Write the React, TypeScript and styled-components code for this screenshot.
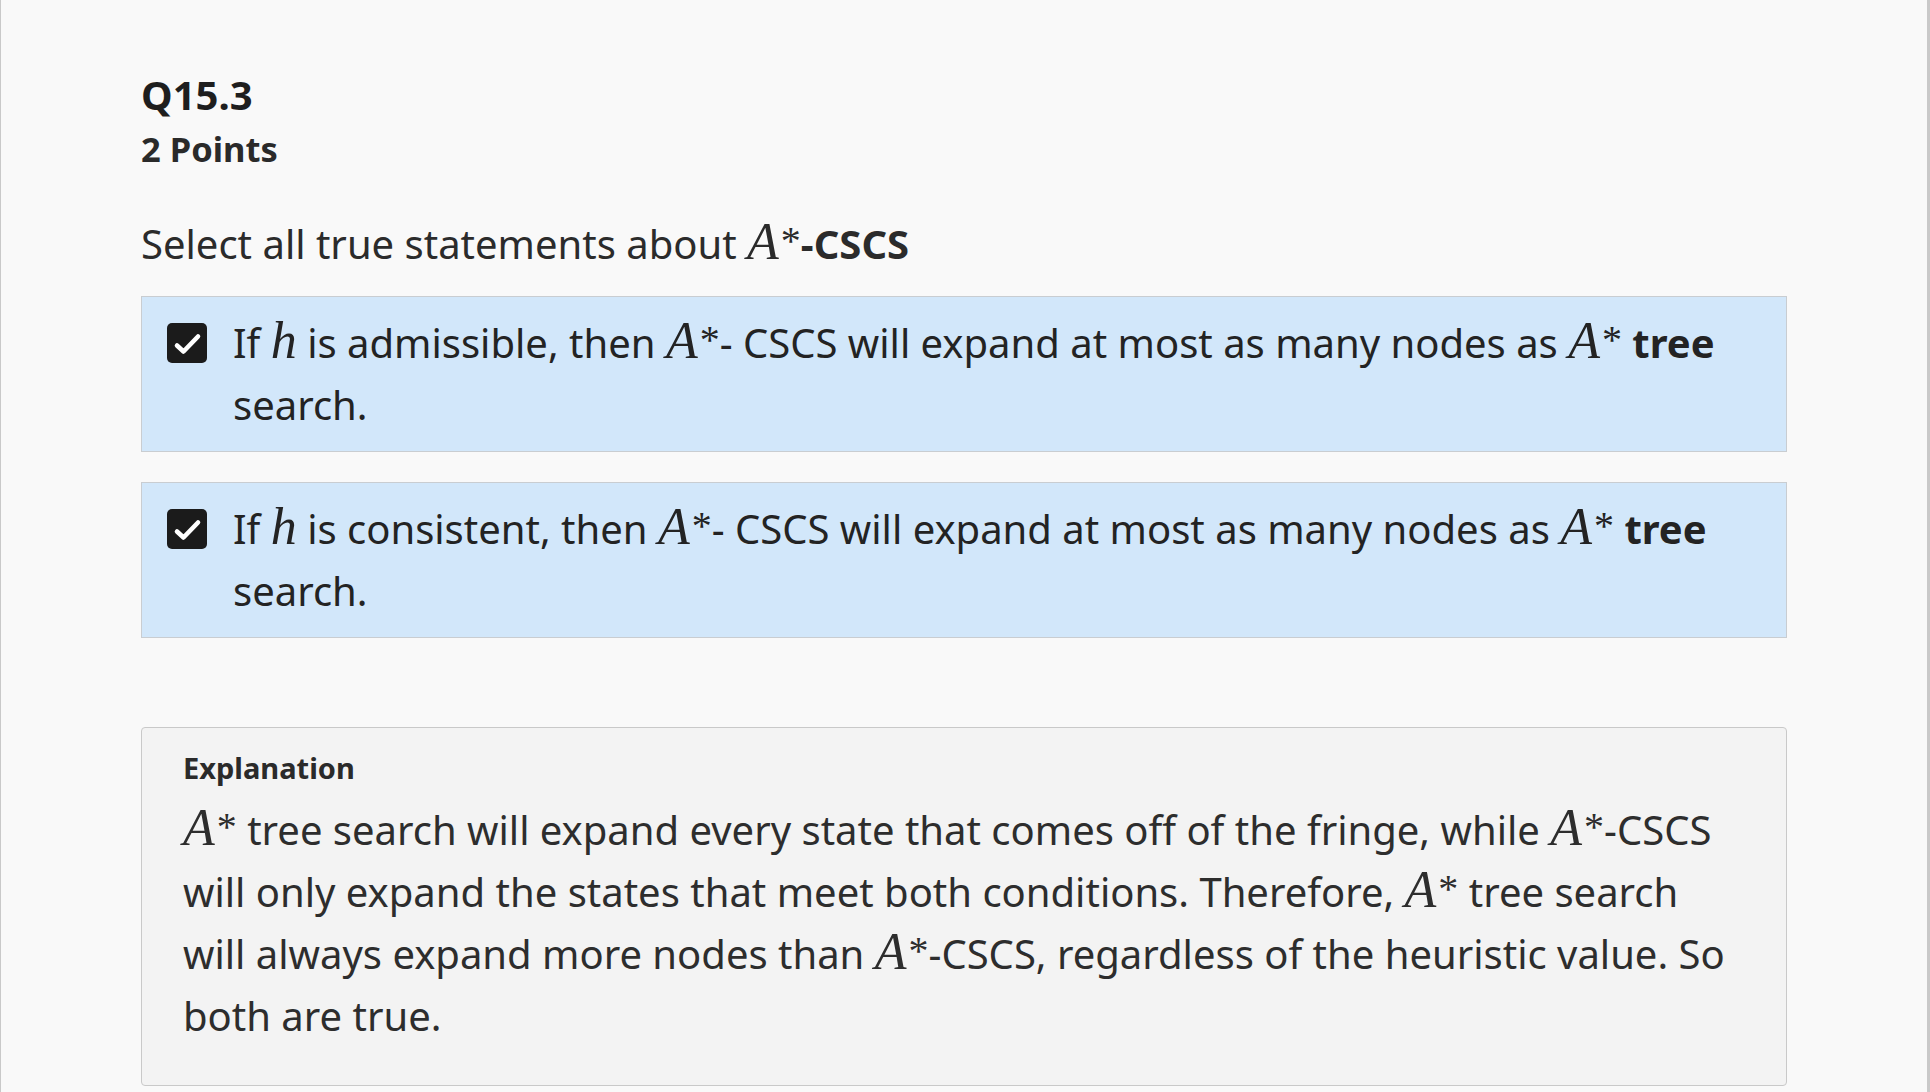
import React from "react";
import styled, { createGlobalStyle } from "styled-components";

const Global = createGlobalStyle`
  html, body {
    margin: 0;
    padding: 0;
    background: #f9f9f9;
  }
  body {
    font-family: "Noto Sans", "Open Sans", sans-serif;
    color: #2b2b2b;
  }
`;

const Page = styled.main`
  box-sizing: border-box;
  width: 1930px;
  min-height: 1092px;
  background: #f9f9f9;
  border-left: 1px solid #c9c9c9;
  border-right: 3px solid #c9c9c9;
  padding: 68px 140px 0 140px;
`;

const Title = styled.h2`
  margin: 0;
  font-size: 40px;
  line-height: 54px;
  font-weight: 700;
  color: #1e1e1e;
`;

const Points = styled.div`
  font-size: 34.5px;
  line-height: 54px;
  font-weight: 700;
  color: #2a2a2a;
`;

const Prompt = styled.p`
  margin: 37px 0 21px;
  font-size: 40px;
  line-height: 62px;
  color: #2b2b2b;
`;

const Options = styled.div`
  display: flex;
  flex-direction: column;
  gap: 30px;
`;

const Option = styled.label<{ $checked?: boolean }>`
  display: flex;
  align-items: flex-start;
  gap: 26px;
  padding: 15px 30px 15px 25px;
  border: 1px solid #c9cdd1;
  background: ${(p) => (p.$checked ? "#d2e7fa" : "#f9f9f9")};
  font-size: 40px;
  line-height: 62px;
  color: #232323;
`;

const BoxCell = styled.span`
  flex: none;
  height: 62px;
  display: flex;
  align-items: center;
`;

const Box = styled.span`
  width: 40px;
  height: 40px;
  border-radius: 5px;
  background: #1b1b1b;
  display: flex;
  align-items: center;
  justify-content: center;
`;

const OptionText = styled.span`
  flex: 1;
`;

const Var = styled.span`
  font-family: "Liberation Serif", "DejaVu Serif", serif;
  font-style: italic;
  font-size: 1.3em;
  line-height: 1;
`;

const Star = styled.span`
  font-family: "Liberation Serif", "DejaVu Serif", serif;
  font-size: 1em;
  line-height: 1;
  vertical-align: 0.12em;
  margin-left: 2px;
`;

const Strong = styled.b`
  font-weight: 700;
`;

const Explanation = styled.section`
  margin-top: 89px;
  border: 1px solid #c9c9c9;
  border-radius: 4px;
  background: #f3f3f3;
  padding: 17px 50px 38px 41px;
`;

const ExplLabel = styled.div`
  font-size: 29px;
  line-height: 46px;
  font-weight: 700;
  color: #2a2a2a;
  margin-bottom: 8px;
`;

const ExplText = styled.p`
  margin: 0;
  font-size: 40px;
  line-height: 62px;
  color: #2d2d2d;
`;

const AStar: React.FC = () => (
  <>
    <Var>A</Var>
    <Star>*</Star>
  </>
);

const Check: React.FC = () => (
  <Box>
    <svg width="40" height="40" viewBox="0 0 40 40" aria-hidden>
      <path
        d="M10 22.5 L16.5 28.5 L31 13.5"
        fill="none"
        stroke="#ffffff"
        strokeWidth="4.6"
        strokeLinecap="round"
        strokeLinejoin="round"
      />
    </svg>
  </Box>
);

const options = [{ word: "admissible" }, { word: "consistent" }];

export default function App() {
  return (
    <>
      <Global />
      <Page>
        <Title>Q15.3</Title>
        <Points>2 Points</Points>
        <Prompt>
          Select all true statements about <AStar />
          <Strong>-CSCS</Strong>
        </Prompt>
        <Options>
          {options.map((o) => (
            <Option key={o.word} $checked>
              <BoxCell>
                <Check />
              </BoxCell>
              <OptionText>
                If <Var>h</Var> is {o.word}, then <AStar />- CSCS will expand at
                most as many nodes as <AStar /> <Strong>tree</Strong> search.
              </OptionText>
            </Option>
          ))}
        </Options>
        <Explanation>
          <ExplLabel>Explanation</ExplLabel>
          <ExplText>
            <AStar /> tree search will expand every state that comes off of the
            fringe, while <AStar />-CSCS will only expand the states that meet
            both conditions. Therefore, <AStar /> tree search will always expand
            more nodes than <AStar />-CSCS, regardless of the heuristic value. So
            both are true.
          </ExplText>
        </Explanation>
      </Page>
    </>
  );
}
